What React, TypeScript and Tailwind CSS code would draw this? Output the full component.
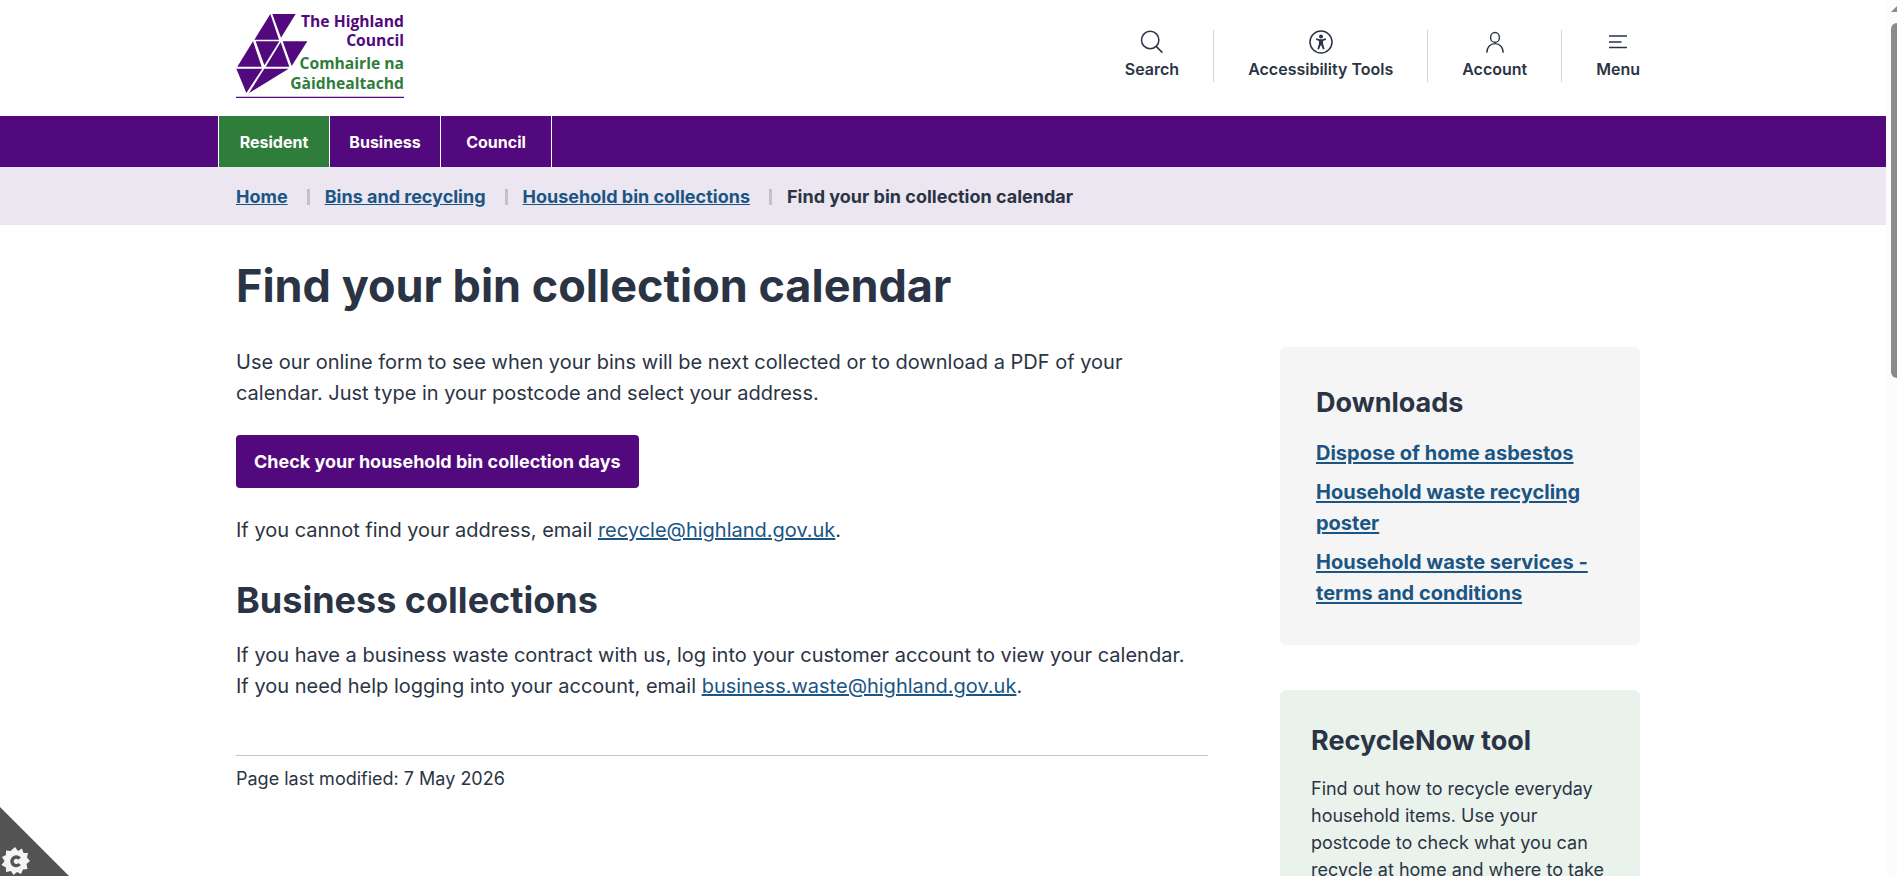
import type { ReactNode } from "react";

const sections = [
  { label: "Resident", active: true },
  { label: "Business", active: false },
  { label: "Council", active: false },
];

const crumbs = ["Home", "Bins and recycling", "Household bin collections"];

const downloads = [
  "Dispose of home asbestos",
  "Household waste recycling poster",
  "Household waste services - terms and conditions",
];

function Container({ children, className = "" }: { children: ReactNode; className?: string }) {
  return <div className={`mx-auto w-full max-w-[1414px] pr-[10px] ${className}`}>{children}</div>;
}

function Logo() {
  return (
    <svg
      viewBox="78 36 504 258"
      className="h-[86px] w-[168px] overflow-visible"
      role="img"
      aria-label="The Highland Council"
    >
      <g fill="#52097d">
        <path d="M181 42 133 119H207Z" />
        <path d="M187 42H257L213 113Z" />
        <path d="M129 124 82 200H155Z" />
        <path d="M137 124H208L163 196Z" />
        <path d="M212 127 167 200H238Z" />
        <path d="M218 124H292L245 198Z" />
        <path d="M79 206H157L109 279Z" />
        <path d="M163 206H236L117 279Z" />
        <path d="M78 290H582V294H78Z" />
      </g>
      <g textAnchor="end" className="font-['Open_Sans'] text-[47px] font-bold">
        <text x="582" y="80" fill="#52097d">The Highland</text>
        <text x="582" y="139" fill="#52097d">Council</text>
        <text x="582" y="207" fill="#2f7d3b">Comhairle na</text>
        <text x="582" y="268" fill="#2f7d3b">Gàidhealtachd</text>
      </g>
    </svg>
  );
}

function SearchIcon() {
  return (
    <svg viewBox="0 0 24 24" className="size-6" fill="none" stroke="currentColor" strokeWidth="1.5">
      <circle cx="10.2" cy="10" r="8.7" />
      <path d="m16.2 16.4 6.2 6.2" />
    </svg>
  );
}

function AccessibilityIcon() {
  return (
    <svg viewBox="0 0 24 24" className="size-6" fill="none" stroke="currentColor">
      <circle cx="12" cy="12" r="11" strokeWidth="1.5" />
      <g fill="currentColor" stroke="none">
        <circle cx="12" cy="6.4" r="2" />
        <path d="M7.3 8.2 10.6 9.2H13.4L16.7 8.2 17.1 9.8 14 10.9V13.6L15.6 19 14 19.6 12.3 15.2H11.7L10 19.6 8.4 19 10 13.6V10.9L6.9 9.8Z" />
      </g>
    </svg>
  );
}

function AccountIcon() {
  return (
    <svg viewBox="0 0 24 24" className="size-6" fill="none" stroke="currentColor" strokeWidth="1.4">
      <ellipse cx="12" cy="7.4" rx="4.4" ry="4.9" />
      <path d="M3.8 22.8C3.8 17.4 7 13.6 12 13.6S20.2 17.4 20.2 22.8" />
    </svg>
  );
}

function MenuIcon() {
  return (
    <svg viewBox="0 0 24 24" className="size-6" fill="none" stroke="currentColor" strokeWidth="1.6">
      <path d="M3 6H21M3 12H15.5M3 17.5H21" />
    </svg>
  );
}

const tools = [
  { label: "Search", icon: <SearchIcon /> },
  { label: "Accessibility Tools", icon: <AccessibilityIcon /> },
  { label: "Account", icon: <AccountIcon /> },
  { label: "Menu", icon: <MenuIcon /> },
];

function Header() {
  return (
    <header>
      <Container className="flex h-[116px] items-start justify-between">
        <a href="#" className="mt-3">
          <Logo />
        </a>
        <div className="mt-[30px] flex divide-x divide-[#d3d3d6]">
          {tools.map((t) => (
            <button
              key={t.label}
              type="button"
              className="flex h-[52px] flex-col items-center gap-[3px] px-[34px] text-base leading-6 font-semibold last:pr-0"
            >
              {t.icon}
              {t.label}
            </button>
          ))}
        </div>
      </Container>
    </header>
  );
}

function SectionNav() {
  return (
    <nav aria-label="Sections" className="bg-[#52097d]">
      <Container>
        <ul className="-ml-[18px] flex border-l border-white">
          {sections.map((s) => (
            <li key={s.label}>
              <a
                href="#"
                className={`flex h-[51px] w-[111px] items-center justify-center border-r border-white text-base font-bold text-white ${
                  s.active ? "bg-[#2f7d3b]" : ""
                }`}
              >
                {s.label}
              </a>
            </li>
          ))}
        </ul>
      </Container>
    </nav>
  );
}

function Breadcrumb() {
  return (
    <nav aria-label="Breadcrumb" className="bg-[#ebe6f0]">
      <Container>
        <ol className="flex h-[58px] items-center pt-0.5 text-lg font-bold">
          {crumbs.map((c) => (
            <li key={c} className="flex items-center">
              <a href="#" className="text-[#1b5584] underline">
                {c}
              </a>
              <span className="mr-[15px] ml-[19px] h-4 w-[3px] bg-[#c5c0cc]" />
            </li>
          ))}
          <li aria-current="page">Find your bin collection calendar</li>
        </ol>
      </Container>
    </nav>
  );
}

function MailLink({ address }: { address: string }) {
  return (
    <a href={`mailto:${address}`} className="text-[#1b5584] underline">
      {address}
    </a>
  );
}

function Article() {
  return (
    <article className="min-w-0 flex-1 text-xl leading-[31px]">
      <p>
        Use our online form to see when your bins will be next collected or to download a PDF of your
        calendar. Just type in your postcode and select your address.
      </p>
      <button
        type="button"
        className="mt-[26px] block h-[53px] rounded bg-[#52097d] px-[18px] text-lg font-bold text-white"
      >
        Check your household bin collection days
      </button>
      <p className="mt-[27px]">
        If you cannot find your address, email <MailLink address="recycle@highland.gov.uk" />.
      </p>
      <h2 className="mt-8 text-4xl leading-[44px] font-bold">Business collections</h2>
      <p className="mt-[18px]">
        If you have a business waste contract with us, log into your customer account to view your
        calendar.
        <br />
        If you need help logging into your account, email{" "}
        <MailLink address="business.waste@highland.gov.uk" />.
      </p>
      <p className="mt-[53px] border-t border-[#c4c4c4] pt-[9px] text-lg leading-7">
        Page last modified: 7 May 2026
      </p>
    </article>
  );
}

function Sidebar() {
  return (
    <aside className="w-[360px] shrink-0">
      <section className="rounded-md bg-[#f5f5f5] p-9">
        <h2 className="text-[27px] leading-10 font-bold">Downloads</h2>
        <ul className="mt-[15px] space-y-2 text-xl leading-[31px] font-bold">
          {downloads.map((d) => (
            <li key={d}>
              <a href="#" className="text-[#1b5584] underline decoration-2 underline-offset-2">
                {d}
              </a>
            </li>
          ))}
        </ul>
      </section>
      <section className="mt-[45px] rounded-md bg-[#eaf2ec] px-[31px] pt-[31px] pb-9">
        <h2 className="text-[27px] leading-10 font-bold">RecycleNow tool</h2>
        <p className="mt-[14px] text-lg leading-[27px]">
          Find out how to recycle everyday household items. Use your postcode to check what you can
          recycle at home and where to take
        </p>
      </section>
    </aside>
  );
}

function CookieTab() {
  return (
    <button type="button" aria-label="Cookie control" className="fixed bottom-0 left-0">
      <svg viewBox="0 0 69 69" className="size-[69px]">
        <path d="M0 0 69 69H0Z" fill="#535353" />
        <path
          fill="#f4f4f4"
          d="M15 40 18 44 22 41.5 23.5 46 28 46 27 50.5 30 54 26.5 57 27.5 62 23 62.5 21 67 17 65 13.5 68 11 64 6 65 6 60.5 1.5 58 4.5 54 2 50 6 48 6 43.5 10.5 44Z"
        />
        <path d="M19.6 51.6A4.3 4.3 0 1 0 19.6 57" fill="none" stroke="#535353" strokeWidth="3.4" />
      </svg>
    </button>
  );
}

function Scrollbar() {
  return (
    <div aria-hidden="true" className="w-[11px] shrink-0 overflow-hidden bg-[#fcfcfc] pt-[5px] pl-[5px]">
      <svg viewBox="0 0 14 7" className="h-[7px] w-[14px] max-w-none">
        <path d="M7 0 14 7H0Z" fill="#8b8b89" />
      </svg>
      <div className="mt-[11px] h-[355px] w-3 rounded-full bg-[#8b8b89]" />
    </div>
  );
}

export default function App() {
  return (
    <div className="flex h-screen overflow-hidden bg-white font-['Inter',sans-serif] text-[#2b3444]">
      <div className="min-w-0 flex-1 overflow-hidden">
        <Header />
        <SectionNav />
        <Breadcrumb />
        <main>
          <Container>
            <h1 className="pt-[33px] text-[45px] leading-[56px] font-bold">
              Find your bin collection calendar
            </h1>
            <div className="mt-[33px] flex gap-[72px]">
              <Article />
              <Sidebar />
            </div>
          </Container>
        </main>
      </div>
      <Scrollbar />
      <CookieTab />
    </div>
  );
}
